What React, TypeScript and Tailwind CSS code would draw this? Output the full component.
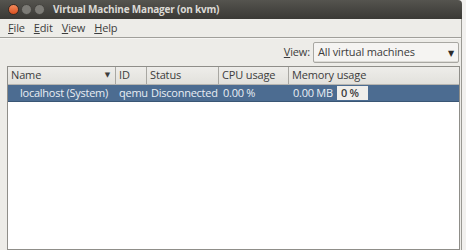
import React from 'react';

const cols = [
  { label: 'Name', w: 'w-[108px]', arrow: true },
  { label: 'ID', w: 'w-[31px]' },
  { label: 'Status', w: 'w-[72px]' },
  { label: 'CPU usage', w: 'w-[70px]' },
  { label: 'Memory usage', w: 'flex-1' },
];

export default function App() {
  return (
    <div className="w-[466px] h-[250px] overflow-hidden bg-[#f2f1ef] font-['Open_Sans','DejaVu_Sans',sans-serif] text-[11px] tracking-[-0.15px] text-[#3c3c3c] select-none">
      {/* title bar */}
      <div className="h-[19px] flex items-center bg-gradient-to-b from-[#55544f] to-[#3a3935] pl-[8px] mr-[4px] rounded-tr-[4px]">
        <span className="w-[11px] h-[11px] rounded-full bg-gradient-to-b from-[#f48a5b] to-[#d9501e] border border-[#3a2a22]" />
        <span className="w-[11px] h-[11px] rounded-full bg-[#7c7b76] border border-[#44433f] ml-[2px]" />
        <span className="w-[11px] h-[11px] rounded-full bg-[#7c7b76] border border-[#44433f] ml-[2px]" />
        <span className="ml-[8px] font-bold text-[#dcdad5] text-[10px] tracking-[-0.2px]">Virtual Machine Manager (on kvm)</span>
      </div>

      <div className="mr-[4px] border-r border-[#9a9993] h-[231px] flex flex-col bg-[#edece8]">
        {/* menu */}
        <div className="h-[18px] flex items-center gap-[9px] pl-[8px] text-[#3c3c3c]">
          <span><u>F</u>ile</span>
          <span><u>E</u>dit</span>
          <span><u>V</u>iew</span>
          <span><u>H</u>elp</span>
        </div>
        <div className="h-[2px] bg-[#a09f9a] border-b border-[#f6f5f3]" />

        {/* toolbar */}
        <div className="h-[27px] flex items-center justify-end pr-[2px]">
          <span className="mr-[3px]"><u>V</u>iew:</span>
          <div className="w-[146px] h-[21px] flex items-center justify-between pl-[4px] pr-[4px] bg-[#f5f4f2] border border-[#a8a7a2] rounded-[2px] shadow-[inset_0_-1px_0_#dcdbd6]">
            <span>All virtual machines</span>
            <span className="text-[8px] text-[#2c2c2c]">▼</span>
          </div>
        </div>

        {/* table */}
        <div className="flex-1 ml-[7px] mr-[1px] border border-[#8f8e89] bg-white flex flex-col">
          <div className="h-[18px] flex bg-gradient-to-b from-[#eeedea] to-[#e2e1dc] border-b border-[#b6b5b0]">
            {cols.map((c, i) => (
              <div
                key={c.label}
                className={`${c.w} flex items-center justify-between px-[3px] ${i < cols.length - 1 ? 'border-r border-[#a8a7a2]' : ''}`}
              >
                <span>{c.label}</span>
                {c.arrow && <span className="text-[7px] mr-[2px]">▼</span>}
              </div>
            ))}
          </div>
          <div className="h-[17px] flex items-center bg-[#4c6c91] text-[#e9eef4] border-b border-[#3a5675] tracking-[-0.25px]">
            <span className="w-[108px] pl-[12px]">localhost (System)</span>
            <span className="w-[31px] pl-[3px]">qemu</span>
            <span className="w-[72px] pl-[4px]">Disconnected</span>
            <span className="w-[70px] pl-[4px]">0.00 %</span>
            <span className="pl-[4px]">0.00 MB</span>
            <span className="ml-[4px] h-[14px] w-[31px] flex items-center pl-[4px] bg-[#efeeeb] text-[#3c3c3c] font-semibold">0 %</span>
          </div>
          <div className="flex-1" />
        </div>
      </div>
    </div>
  );
}
